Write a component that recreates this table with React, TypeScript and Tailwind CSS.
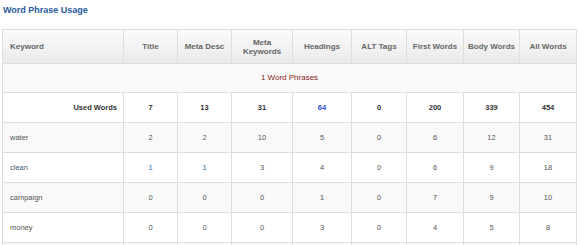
const headers = ['Title', 'Meta Desc', 'Meta Keywords', 'Headings', 'ALT Tags', 'First Words', 'Body Words', 'All Words'];
const widths = ['w-[121px]', 'w-[54px]', 'w-[54px]', 'w-[61px]', 'w-[59px]', 'w-[55px]', 'w-[57px]', 'w-[56px]', 'w-[57px]'];

const used = [7, 13, 31, 64, 0, 200, 339, 454];

const rows: { word: string; vals: number[]; blue?: boolean }[] = [
  { word: 'water', vals: [2, 2, 10, 5, 0, 6, 12, 31] },
  { word: 'clean', vals: [1, 1, 3, 4, 0, 6, 9, 18], blue: true },
  { word: 'campaign', vals: [0, 0, 0, 1, 0, 7, 9, 10] },
  { word: 'money', vals: [0, 0, 0, 3, 0, 4, 5, 8] },
];

export default function App() {
  return (
    <div className="w-[580px] h-[245px] overflow-hidden bg-white font-['Liberation_Sans',Arial,sans-serif]">
      <h2 className="pl-[3px] pt-[4px] h-[29px] text-[9px] font-bold text-[#1f5aa0] leading-[12px]">Word Phrase Usage</h2>
      <table className="ml-[2px] w-[575px] table-fixed border-collapse border border-[#dddddd]">
        <colgroup>
          {widths.map((w, i) => (
            <col key={i} className={w} />
          ))}
        </colgroup>
        <thead>
          <tr className="h-[34px] bg-gradient-to-b from-[#fbfbfb] to-[#e9e9e9]">
            <th className="border border-[#dddddd] px-[7px] text-left text-[8px] font-bold text-[#666666] leading-[10px]">Keyword</th>
            {headers.map((h) => (
              <th key={h} className="border border-[#dddddd] px-[1px] text-center text-[8px] font-bold text-[#666666] leading-[9px]">
                {h === 'Meta Keywords' ? (
                  <>
                    Meta
                    <br />
                    Keywords
                  </>
                ) : (
                  h
                )}
              </th>
            ))}
          </tr>
        </thead>
        <tbody>
          <tr className="h-[29px] bg-[#f9f9f9]">
            <td colSpan={9} className="border border-[#dddddd] text-center text-[8px] text-[#8b1c1c]">1 Word Phrases</td>
          </tr>
          <tr className="h-[30px] bg-white">
            <td className="border border-[#dddddd] px-[6px] text-right text-[7.5px] font-bold text-[#333333]">Used Words</td>
            {used.map((v, i) => (
              <td key={i} className={`border border-[#dddddd] text-center text-[7.5px] font-bold ${i === 3 ? 'text-[#2d4fd6]' : 'text-[#333333]'}`}>
                {v}
              </td>
            ))}
          </tr>
          {rows.map((r, ri) => (
            <tr key={r.word} className={`h-[30px] ${ri % 2 === 0 ? 'bg-[#f9f9f9]' : 'bg-white'}`}>
              <td className={`border border-[#dddddd] px-[7px] text-left text-[7.5px] ${r.blue ? 'text-[#3a5d7a]' : 'text-[#555555]'}`}>{r.word}</td>
              {r.vals.map((v, i) => (
                <td key={i} className={`border border-[#dddddd] text-center text-[7.5px] ${r.blue && i < 2 ? 'text-[#2f68a8]' : 'text-[#555555]'}`}>
                  {v}
                </td>
              ))}
            </tr>
          ))}
          <tr className="h-[30px] bg-[#f9f9f9]">
            {widths.map((_, i) => (
              <td key={i} className="border border-[#dddddd]" />
            ))}
          </tr>
        </tbody>
      </table>
    </div>
  );
}
